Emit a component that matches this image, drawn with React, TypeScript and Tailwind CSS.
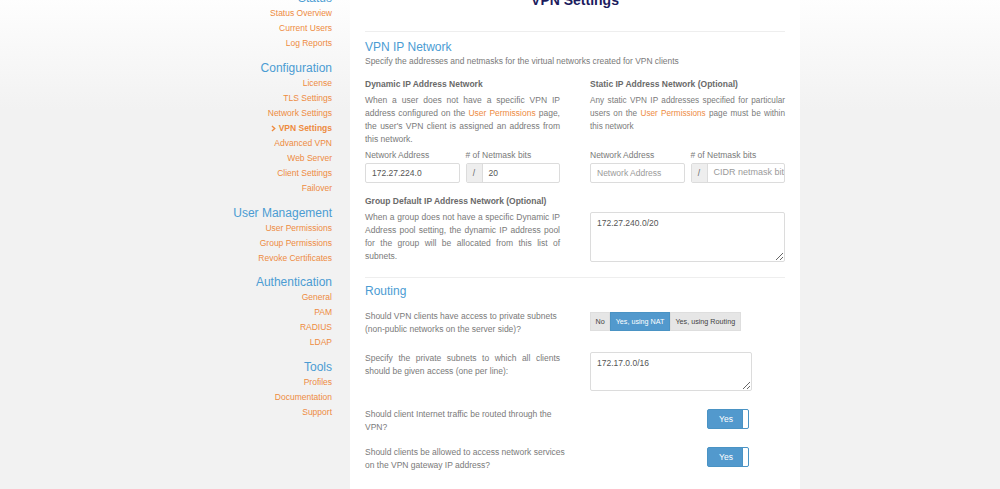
import React from "react";

const font = { fontFamily: '"Liberation Sans", Arial, sans-serif' };

const nav = [
  { title: "Status", items: ["Status Overview", "Current Users", "Log Reports"] },
  {
    title: "Configuration",
    items: ["License", "TLS Settings", "Network Settings", "VPN Settings", "Advanced VPN", "Web Server", "Client Settings", "Failover"],
  },
  { title: "User Management", items: ["User Permissions", "Group Permissions", "Revoke Certificates"] },
  { title: "Authentication", items: ["General", "PAM", "RADIUS", "LDAP"] },
  { title: "Tools", items: ["Profiles", "Documentation", "Support"] },
];

const Sidebar = () => (
  <div className="w-[350px] shrink-0 pr-[18px] pt-[1px] text-right">
    {nav.map((g, i) => (
      <div key={g.title} className={i === 0 ? "" : "mt-[8.8px]"}>
        <div className="text-[12px] leading-[16px] text-[#4b9cd3]">{g.title}</div>
        {g.items.map((it) => {
          const active = it === "VPN Settings";
          return (
            <div
              key={it}
              className={`text-[8.5px] leading-[15px] text-[#ee8b3f] ${active ? "font-bold" : ""}`}
            >
              {active && (
                <svg viewBox="0 0 8 10" className="inline-block w-[5px] h-[7px] mr-[3px] mb-[1px]">
                  <path d="M1.5 1 L6 5 L1.5 9" fill="none" stroke="#ee8b3f" strokeWidth="2.2" />
                </svg>
              )}
              {it}
            </div>
          );
        })}
      </div>
    ))}
  </div>
);

const Link = ({ children }: { children: React.ReactNode }) => (
  <span className="text-[#ee8b3f]">{children}</span>
);

const TextInput = ({ value, placeholder }: { value?: string; placeholder?: string }) => (
  <div className="h-[20px] border border-[#dcdcdc] rounded-[2px] flex items-center px-[6px] text-[8.5px] overflow-hidden whitespace-nowrap">
    {value ? <span className="text-[#555]">{value}</span> : <span className="text-[#9a9a9a]">{placeholder}</span>}
  </div>
);

const MaskInput = ({ value, placeholder }: { value?: string; placeholder?: string }) => (
  <div className="h-[20px] border border-[#dcdcdc] rounded-[2px] flex text-[8.5px] overflow-hidden whitespace-nowrap">
    <div className="w-[16px] shrink-0 bg-[#eeeeee] border-r border-[#dcdcdc] flex items-center justify-center text-[#666]">/</div>
    <div className="flex-1 flex items-center pl-[6px] overflow-hidden">
      {value ? <span className="text-[#555]">{value}</span> : <span className="text-[#9a9a9a] text-[9px]">{placeholder}</span>}
    </div>
  </div>
);

const AddressFields = ({ addr, mask }: { addr?: string; mask?: string }) => (
  <div className="mt-[3px]">
    <div className="grid grid-cols-2 gap-x-[6px] text-[8.5px] leading-[13px] text-[#7a7a7a]">
      <div>Network Address</div>
      <div># of Netmask bits</div>
    </div>
    <div className="grid grid-cols-2 gap-x-[6px] mt-[1px]">
      <TextInput value={addr} placeholder="Network Address" />
      <MaskInput value={mask} placeholder="CIDR netmask bits" />
    </div>
  </div>
);

const Toggle = () => (
  <div className="ml-[117px] mt-[1.5px] w-[42px] h-[20px] rounded-[2px] border border-[#4a93c4] bg-[#5299cd] flex overflow-hidden">
    <div className="flex-1 flex items-center justify-center text-[8.5px] text-white pl-[2px]">Yes</div>
    <div className="w-[6px] bg-white border-l border-[#4a93c4]" />
  </div>
);

export default function App() {
  return (
    <div
      style={font}
      className="-mt-[11px] min-h-[500px] flex bg-[linear-gradient(180deg,#ffffff_0px,#f2f2f2_120px)] text-[#7a7a7a]"
    >
      <Sidebar />
      <div className="w-[450px] shrink-0 bg-white px-[15px] pt-[1px] min-h-[500px]">
        <h1 className="text-center text-[14px] leading-[20px] font-bold text-[#1c1c5e]">VPN Settings</h1>
        <div className="mt-[21px] border-t border-[#eeeeee]" />

        <h2 className="mt-[7px] text-[12px] leading-[16px] text-[#4b9cd3]">VPN IP Network</h2>
        <p className="text-[8.45px] leading-[13px]">
          Specify the addresses and netmasks for the virtual networks created for VPN clients
        </p>

        <div className="mt-[10px] grid grid-cols-2 gap-x-[30px]">
          <div>
            <div className="text-[8.5px] leading-[13px] font-bold text-[#6a6a6a]">Dynamic IP Address Network</div>
            <p className="mt-[3px] text-[8.5px] leading-[13px] text-justify">
              When a user does not have a specific VPN IP address configured on the <Link>User Permissions</Link> page,
              the user's VPN client is assigned an address from this network.
            </p>
          </div>
          <div>
            <div className="text-[8.5px] leading-[13px] font-bold text-[#6a6a6a]">Static IP Address Network (Optional)</div>
            <p className="mt-[3px] text-[8.2px] leading-[13px] text-justify">
              Any static VPN IP addresses specified for particular users on the <Link>User Permissions</Link> page must be
              within this network
            </p>
          </div>
          <AddressFields addr="172.27.224.0" mask="20" />
          <AddressFields />

          <div className="mt-[11.5px]">
            <div className="text-[8.5px] leading-[13px] font-bold text-[#6a6a6a]">Group Default IP Address Network (Optional)</div>
            <p className="mt-[3px] text-[8.5px] leading-[13px] text-justify">
              When a group does not have a specific Dynamic IP Address pool setting, the dynamic IP address pool for the
              group will be allocated from this list of subnets.
            </p>
          </div>
          <div className="mt-[29px]">
            <textarea
              readOnly
              defaultValue="172.27.240.0/20"
              className="block w-full h-[50px] border border-[#dcdcdc] rounded-[2px] px-[6px] py-[4px] text-[8.5px] leading-[13px] text-[#555] outline-none"
            />
          </div>
        </div>

        <div className="mt-[14.5px] border-t border-[#eeeeee]" />
        <h2 className="mt-[5px] text-[12px] leading-[16px] text-[#4b9cd3]">Routing</h2>

        <div className="mt-[10.5px] flex text-[8.5px] leading-[13px]">
          <p className="w-[200px]">Should VPN clients have access to private subnets (non-public networks on the server side)?</p>
          <div className="ml-[25px] mt-[2.5px] flex h-[19px] text-[7.2px]">
            <div className="px-[4.5px] flex items-center bg-[#e6e6e6] border border-[#dedede] text-[#444]">No</div>
            <div className="px-[4.5px] flex items-center bg-[#5299cd] border border-[#4a93c4] text-white">Yes, using NAT</div>
            <div className="px-[4.5px] flex items-center bg-[#e6e6e6] border border-[#dedede] text-[#444]">Yes, using Routing</div>
          </div>
        </div>

        <div className="mt-[16px] flex text-[8.5px] leading-[13px]">
          <p className="w-[195px] text-justify">
            Specify the private subnets to which all clients should be given access (one per line):
          </p>
          <div className="ml-[30px] mt-[0.5px]">
            <textarea
              readOnly
              defaultValue="172.17.0.0/16"
              className="block w-[162px] h-[39px] border border-[#dcdcdc] rounded-[2px] px-[6px] py-[4px] text-[8.5px] leading-[13px] text-[#555] outline-none"
            />
          </div>
        </div>

        <div className="mt-[16.5px] flex text-[8.5px] leading-[13px]">
          <p className="w-[200px]">Should client Internet traffic be routed through the VPN?</p>
          <div className="ml-[25px]">
            <Toggle />
          </div>
        </div>

        <div className="mt-[12px] flex text-[8.5px] leading-[13px]">
          <p className="w-[200px]">Should clients be allowed to access network services on the VPN gateway IP address?</p>
          <div className="ml-[25px]">
            <Toggle />
          </div>
        </div>
      </div>
    </div>
  );
}
